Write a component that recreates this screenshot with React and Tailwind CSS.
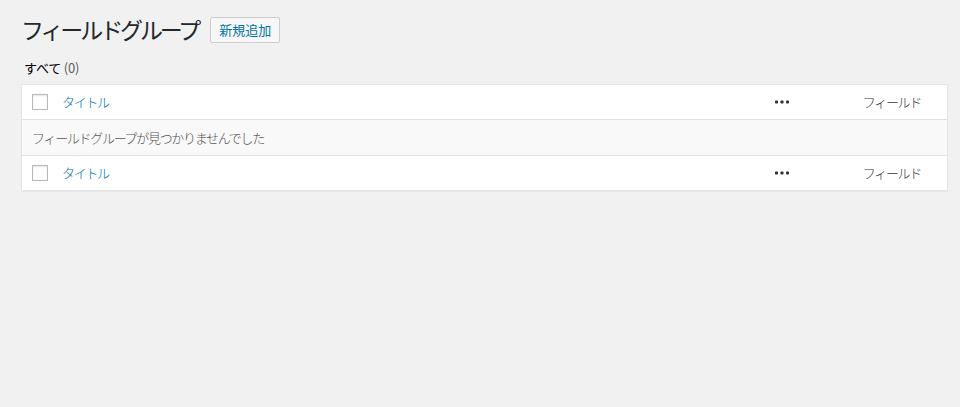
export default function App() {
  const font = { fontFamily: '"Noto Sans CJK JP", "Noto Sans", sans-serif' };

  const Dots = () => (
    <svg width="14" height="4" viewBox="0 0 14 4" className="inline-block">
      <rect x="0" y="0.5" width="3" height="3" rx="0.8" fill="#2c3338" />
      <rect x="5.5" y="0.5" width="3" height="3" rx="0.8" fill="#2c3338" />
      <rect x="11" y="0.5" width="3" height="3" rx="0.8" fill="#2c3338" />
    </svg>
  );

  const HeaderRow = ({ last }) => (
    <div className={`flex h-[35px] items-center ${last ? 'border-t border-[#e1e1e1]' : 'border-b border-[#e1e1e1]'}`}>
      <div className="w-[40px] pl-[10px] flex items-center">
        <span className="block w-4 h-4 border border-[#b4b9be] bg-white shadow-[inset_0_1px_2px_rgba(0,0,0,0.1)]"></span>
      </div>
      <a className="text-[13px] font-light tracking-[-1.3px] text-[#0073aa] flex-1">タイトル</a>
      <div className="w-[40px] flex justify-center"><Dots /></div>
      <div className="w-[145px] pr-[26px] text-right text-[13px] font-light tracking-[-1.3px] text-[#32373c]">フィールド</div>
    </div>
  );

  return (
    <div className="min-h-screen bg-[#f1f1f1] pl-[21px] pr-[12px] pt-[15px]" style={font}>
      <div className="flex items-center">
        <h1 className="text-[23px] leading-[29px] text-[#23282d] font-normal tracking-[-3.1px]">フィールドグループ</h1>
        <button className="ml-[12px] h-[26px] px-[8px] text-[13px] text-[#0073aa] bg-[#f7f7f7] border border-[#cccccc] rounded-[2px]">
          新規追加
        </button>
      </div>

      <div className="mt-[15px] pl-[3px] text-[13px] leading-[18px] tracking-[-0.2px]">
        <span className="text-black">すべて</span> <span className="text-[#555d66]">(0)</span>
      </div>

      <div className="mt-[7px] bg-white border border-[#e5e5e5] shadow-[0_1px_1px_rgba(0,0,0,0.04)]">
        <HeaderRow />
        <div className="h-[35px] flex items-center pl-[10px] bg-[#f9f9f9] text-[13px] font-light tracking-[-1.3px] text-[#555]">
          フィールドグループが見つかりませんでした
        </div>
        <HeaderRow last />
      </div>
    </div>
  );
}
